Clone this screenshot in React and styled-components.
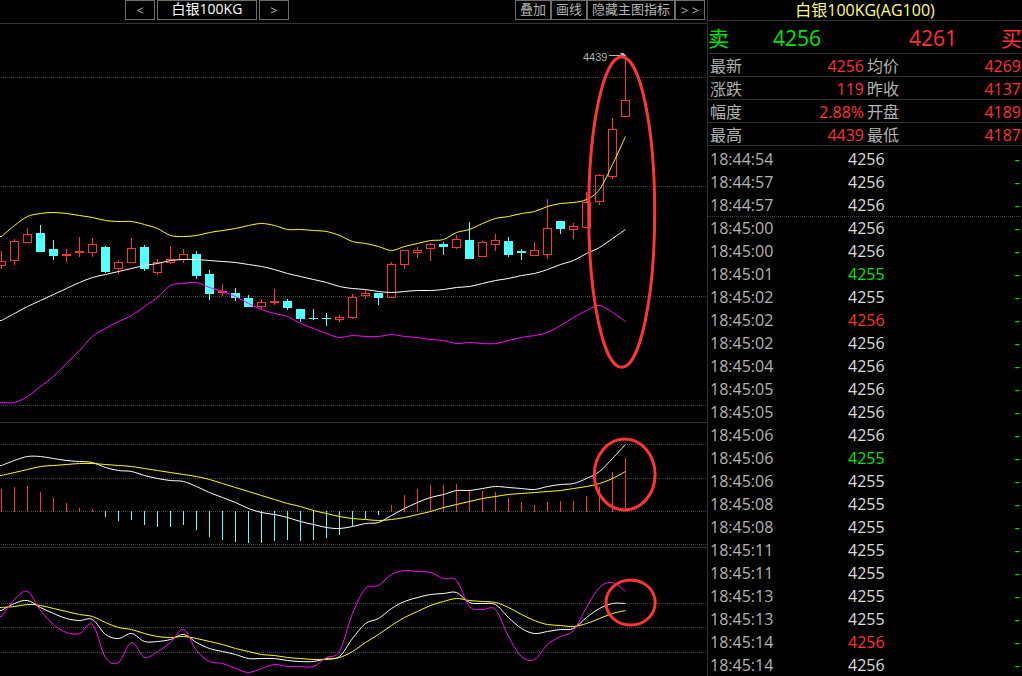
import React from 'react'
import styled, { createGlobalStyle } from 'styled-components'

const STEP = 13;
const RED = '#ff3232';
const CYAN = '#54ffff';
const GREEN = '#00e600';

// high, body top, body bottom, low, falling
const candles = [
  [251,261,266,269],[239,241,261,265],[228,234,243,243],[225,233,252,252,1],[240,249,256,260,1],
  [249,254,256,262],[237,251,253,257],[238,244,253,257],[246,247,272,273,1],[260,262,269,274],
  [238,248,263,263],[245,247,269,271,1],[259,262,273,275],[246,259,263,264],[249,254,260,263],
  [251,254,276,279,1],[270,274,294,300,1],[284,291,293,296],[288,293,298,301,1],[295,298,307,307,1],
  [299,302,307,309],[289,301,303,305],[299,301,308,310,1],[309,309,319,322,1],[309,318,319,320,1],
  [313,318,319,326,1],[315,317,320,322],[294,297,318,319],[290,293,296,299],[293,293,298,305,1],
  [262,264,298,298],[250,250,265,269],[247,250,253,258],[243,244,249,261],[242,244,247,255,1],
  [235,239,248,249],[222,240,259,259,1],[241,242,257,257],[234,240,245,251],[237,241,255,257,1],
  [249,251,253,260,1],[242,250,256,256],[199,228,255,259],[221,221,229,234,1],[223,226,230,239],
  [192,202,228,228],[174,175,202,205],[118,129,177,179],[55,100,117,117],
];

const boll = {
  upper: [236,225,216,213,212,213,215,217,220,221,221,224,228,235,236,235,232,230,228,225,223,225,229,229,230,231,235,241,243,246,250,246,243,240,239,232,229,223,218,216,213,211,206,203,202,199,189,164,136],
  mid: [320,313,306,300,294,288,282,277,274,271,268,265,263,260,259,259,260,261,262,264,266,269,273,276,279,282,286,288,289,291,292,291,290,290,289,287,286,283,280,278,275,273,269,264,260,253,247,238,229],
  lower: [402,402,396,386,376,363,350,336,328,321,315,306,297,285,283,282,287,291,296,303,309,313,316,323,328,333,337,335,336,336,334,336,337,339,340,343,342,343,343,340,337,335,332,325,317,310,305,312,321],
};

const macd = {
  dif: [465,460,456,456,458,460,461,462,467,470,471,475,478,480,481,486,492,497,502,508,512,514,517,521,524,527,528,526,523,522,515,508,502,497,494,490,490,488,486,487,488,489,486,484,483,478,471,458,444],
  dea: [475,472,469,466,465,464,463,463,464,465,466,468,470,472,474,476,479,483,487,491,495,499,503,506,510,513,516,518,519,520,519,517,514,511,507,504,501,498,496,494,493,492,491,490,488,486,483,478,471],
  bars: [489,487,486,492,498,503,508,509,517,521,520,525,527,527,525,530,537,540,542,543,543,541,540,541,540,538,535,526,519,515,505,495,489,485,485,484,490,491,492,498,502,505,502,501,501,496,487,472,458],
};

const kdj = {
  k: [610,603,600,607,613,618,620,619,634,638,633,641,641,639,634,642,648,651,654,658,658,658,660,661,661,658,656,638,623,618,608,601,597,594,593,592,602,603,604,617,628,633,631,629,628,617,608,603,603],
  d: [607,606,604,605,608,611,614,616,622,627,629,633,636,637,636,638,641,644,648,651,654,655,657,658,659,659,657,651,642,634,625,617,611,605,601,598,600,601,602,607,614,620,624,625,626,623,618,613,610],
  j: [616,599,591,610,624,632,633,624,657,662,642,657,651,642,629,650,661,663,668,672,668,664,666,666,666,657,651,613,588,585,574,570,571,572,578,580,606,609,609,636,656,659,644,636,630,607,587,582,591],
};

const quotes = [
  ['最新', '4256', '均价', '4269'],
  ['涨跌', '119', '昨收', '4137'],
  ['幅度', '2.88%', '开盘', '4189'],
  ['最高', '4439', '最低', '4187'],
];

const ticks = [
  ['18:44:54', 4256],['18:44:57', 4256],['18:44:57', 4256],['18:45:00', 4256],['18:45:00', 4256],
  ['18:45:01', 4255, GREEN],['18:45:02', 4255],['18:45:02', 4256, RED],['18:45:02', 4256],['18:45:04', 4256],
  ['18:45:05', 4256],['18:45:05', 4256],['18:45:06', 4256],['18:45:06', 4255, GREEN],['18:45:06', 4255],
  ['18:45:08', 4255],['18:45:08', 4255],['18:45:11', 4255],['18:45:11', 4255],['18:45:13', 4255],
  ['18:45:13', 4255],['18:45:14', 4256, RED],['18:45:14', 4256],
];

const smooth = (ys) => {
  const p = ys.map((y, i) => [i * STEP + 1.5, y + 0.5]);
  let d = `M0 ${p[0][1]}L${p[0][0]} ${p[0][1]}`;
  for (let i = 0; i < p.length - 1; i++) {
    const a = p[i - 1] || p[i], b = p[i], c = p[i + 1], e = p[i + 2] || c;
    d += `C${b[0] + (c[0] - a[0]) / 6} ${b[1] + (c[1] - a[1]) / 6} ${c[0] - (e[0] - b[0]) / 6} ${c[1] - (e[1] - b[1]) / 6} ${c[0]} ${c[1]}`;
  }
  return d;
}

function Candle({ index, data }) {
  const [high, top, bottom, low, falling] = data;
  const x = index * STEP + 1;
  const color = falling ? CYAN : RED;
  return (
    <g shapeRendering='crispEdges' fill={color}>
      <rect x={x} y={high} width='1' height={top - high} />
      <rect x={x} y={bottom} width='1' height={low - bottom} />
      {falling || bottom - top < 3
        ? <rect x={x - 4} y={top} width='9' height={bottom - top} />
        : <rect x={x - 3.5} y={top + 0.5} width='8' height={bottom - top - 1} fill='none' stroke={color} />}
    </g>
  )
}

// every pane draws in the y coordinates of the whole chart, shifted by its own top
function Pane({ top, height, grid, label, last, children }) {
  return (
    <PaneSvg $height={height} $last={last} role='img' aria-label={label}>
      <g transform={`translate(0 ${-top})`}>
        {grid.map(y => <GridLine key={y} x1='1' x2='100%' y1={y + 0.5} y2={y + 0.5} />)}
        {children}
      </g>
    </PaneSvg>
  )
}

export default function App() {
  return (
    <Page>
      <GlobalStyle />
      <ChartSide>
        <Toolbar>
          <Group>
            <ArrowButton $width={30} aria-label='上一个'>&lt;</ArrowButton>
            <ToolButton $width={100} $active>白银100KG</ToolButton>
            <ArrowButton $width={30} aria-label='下一个'>&gt;</ArrowButton>
          </Group>
          <Tools>
            <ToolButton $width={36}>叠加</ToolButton>
            <ToolButton $width={36}>画线</ToolButton>
            <ToolButton $width={88}>隐藏主图指标</ToolButton>
            <ArrowButton $width={30}>&gt; &gt;</ArrowButton>
          </Tools>
        </Toolbar>

        <Pane top={24} height={398} grid={[77, 186, 296, 405]} label='K线'>
          {candles.map((item, index) => <Candle key={index} index={index} data={item} />)}
          <Curve d={smooth(boll.mid)} stroke='#ffffff' />
          <Curve d={smooth(boll.upper)} stroke='#ffff00' />
          <Curve d={smooth(boll.lower)} stroke='#ff00ff' />
          <path d='M609 55.5H626M620 53.5H624M621 54.5H625' stroke='#b4b4b4' shapeRendering='crispEdges' />
          <PeakLabel x='583' y='61'>4439</PeakLabel>
          <Mark cx='621.7' cy='212' rx='33' ry='155.3' />
        </Pane>

        <Pane top={423} height={124} grid={[444, 478, 511, 544]} label='MACD'>
          {macd.bars.map((y, i) => (
            <rect
              key={i} x={i * STEP + 1} width='1' shapeRendering='crispEdges'
              y={y < 512 ? y : 511} height={y < 512 ? 512 - y : y - 511} fill={y < 512 ? RED : CYAN}
            />
          ))}
          <Curve d={smooth(macd.dif)} stroke='#ffffff' />
          <Curve d={smooth(macd.dea)} stroke='#ffff00' />
          <Mark cx='624.7' cy='474.5' rx='30.4' ry='35.4' />
        </Pane>

        <Pane top={548} height={128} grid={[603, 627, 652]} label='KDJ' last>
          <Curve d={smooth(kdj.k)} stroke='#ffffff' />
          <Curve d={smooth(kdj.d)} stroke='#ffff00' />
          <Curve d={smooth(kdj.j)} stroke='#ff00ff' />
          <Mark cx='630.6' cy='602.5' rx='24.6' ry='22.6' />
        </Pane>
      </ChartSide>

      <QuoteSide>
        <Title>白银100KG(AG100)</Title>
        <Deal>
          <DealHalf $color={GREEN}><span>卖</span><span>4256</span></DealHalf>
          <DealHalf $color={RED} $buy><span>4261</span><span>买</span></DealHalf>
        </Deal>
        <QuoteTable>
          <tbody>
            {quotes.map(([a, b, c, d]) => (
              <tr key={a}>
                <th scope='row'>{a}</th><td>{b}</td>
                <th scope='row'>{c}</th><td>{d}</td>
              </tr>
            ))}
          </tbody>
        </QuoteTable>
        <TickTable>
          <tbody>
            {ticks.map(([time, price, color], index) => (
              <TickRow key={index} $color={color} $ruled={index === 3}>
                <td>{time}</td><td>{price}</td><td>-</td>
              </TickRow>
            ))}
          </tbody>
        </TickTable>
      </QuoteSide>
    </Page>
  )
}

const GlobalStyle = createGlobalStyle`
*{
  box-sizing:border-box;
}
body{
  margin:0;
  background:#000;
  font-family:"Open Sans","Noto Sans CJK SC",sans-serif;
}
`;

const Page = styled.div`
display:flex;
min-height:100vh;
background:#000;
color:#b4b4b4;
`;

const ChartSide = styled.main`
flex:1;
min-width:0;
`;

const Toolbar = styled.div`
display:flex;
justify-content:space-between;
height:24px;
padding:0 2px 0 125px;
border-bottom:1px solid #333;
`;

const Group = styled.div`
display:flex;
gap:2px;
`;

const Tools = styled.div`
display:flex;
`;

const ToolButton = styled.button`
width:${p => p.$width}px;
height:20px;
padding:0 0 2px;
border:1px solid #6e6e6e;
background:#000;
color:${p => p.$active ? '#fff' : '#b4b4b4'};
font-family:inherit;
font-size:${p => p.$active ? 14 : 13}px;
line-height:16px;
white-space:nowrap;
`;

const ArrowButton = styled(ToolButton)`
padding:0;
line-height:18px;
`;

const PaneSvg = styled.svg`
display:block;
box-sizing:content-box;
width:100%;
height:${p => p.$height}px;
border-bottom:${p => p.$last ? 'none' : '1px solid #333'};
`;

const GridLine = styled.line`
stroke:#444;
stroke-dasharray:1 1;
shape-rendering:crispEdges;
`;

const Curve = styled.path`
fill:none;
stroke-width:1;
`;

const Mark = styled.ellipse`
fill:none;
stroke:#ff3535;
stroke-width:3;
`;

const PeakLabel = styled.text`
fill:#b4b4b4;
font-family:"Liberation Sans",sans-serif;
font-size:11px;
`;

const QuoteSide = styled.aside`
width:315px;
flex:none;
border-left:1px solid #333;
`;

const Title = styled.h1`
height:21px;
margin:0;
border-bottom:1px solid #333;
color:#ffff80;
font-size:16px;
font-weight:400;
line-height:20px;
text-align:center;
`;

const Deal = styled.div`
display:flex;
height:33px;
border-bottom:1px solid #333;
`;

const DealHalf = styled.div`
flex:1;
display:flex;
justify-content:space-between;
padding:${p => p.$buy ? '0 0 0 44px' : '0 44px 0 0'};
color:${p => p.$color};
font-size:21px;
line-height:34px;
`;

const DataTable = styled.table`
width:100%;
border-collapse:separate;
border-spacing:0;
table-layout:fixed;
font-size:16px;
line-height:20px;

tr{
  height:23px;
}
`;

const QuoteTable = styled(DataTable)`
line-height:19px;

th,td{
  height:23px;
  padding:3px 1px 0 2px;
  border-bottom:1px solid #333;
  font-weight:400;
  white-space:nowrap;
}
th{
  text-align:left;
}
td{
  text-align:right;
  color:${RED};
}
`;

const TickTable = styled(DataTable)`
td{
  padding:3px 2px 0 2px;
}
td:first-child{
  width:138px;
}
td:last-child{
  color:${GREEN};
  text-align:right;
}
`;

const TickRow = styled.tr`
background:${p => p.$ruled ? 'repeating-linear-gradient(90deg,#444 0 1px,transparent 1px 2px) 0 1px / 100% 1px no-repeat' : 'none'};

td:nth-child(2){
  color:${p => p.$color || '#dcdcdc'};
}
`;
